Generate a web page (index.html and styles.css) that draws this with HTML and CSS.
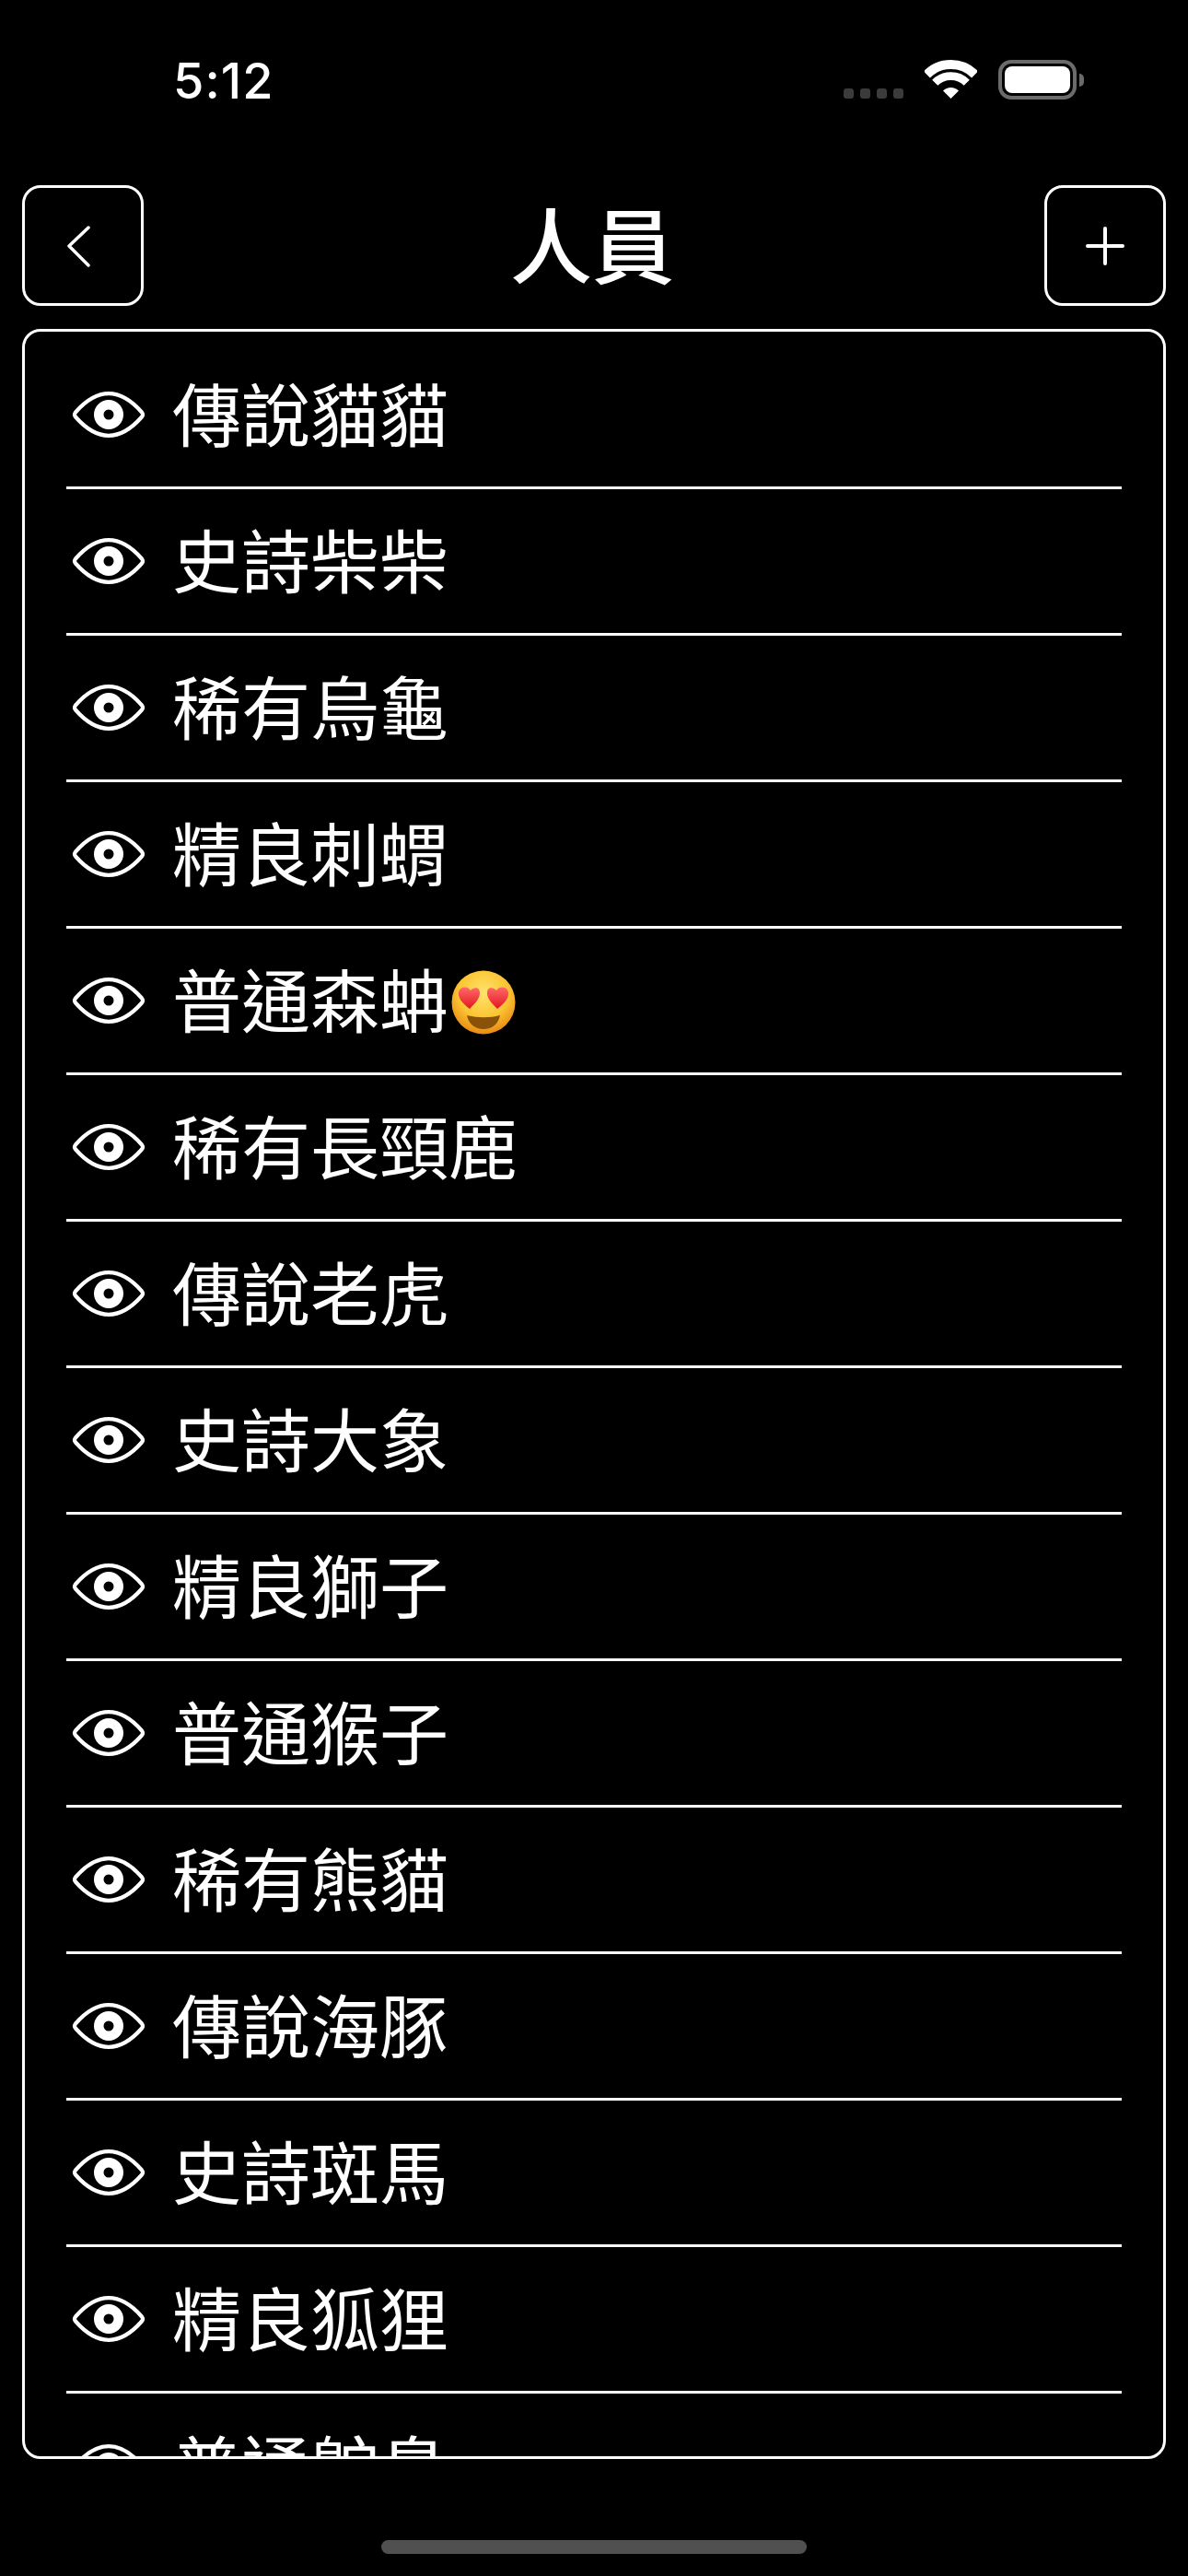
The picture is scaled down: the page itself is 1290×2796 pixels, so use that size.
FILE: index.html
```html
<!DOCTYPE html>
<html>
  <head>
    <title>人員</title>
    <meta charset="utf-8">
    <link rel="stylesheet" href="styles.css">
  </head>
  <body>
    <svg class="defs" width="0" height="0">
      <symbol id="eye" viewBox="0 0 80 50">
        <path d="M4 22.500C15 10 28 2.200 40 2.200S65 10 76 22.500Q78 25 76 27.500C65 40 52 47.800 40 47.800S15 40 4 27.500Q2 25 4 22.500Z" fill="none" stroke="#fff" stroke-width="4.200" stroke-linejoin="round"/>
        <circle cx="40" cy="25" r="16" fill="#fff"/>
        <circle cx="40" cy="25" r="5.500" fill="#000"/>
      </symbol>
    </svg>

    <div class="status">
      <div class="time">5:12</div>
      <div class="status-icons">
        <div class="dots"><i></i><i></i><i></i><i></i></div>
        <svg class="wifi" width="57" height="42" viewBox="0 0 57 42">
          <path d="M2.340 15.840A37 37 0 0 1 54.660 15.840" fill="none" stroke="#fff" stroke-width="10"/>
          <path d="M11.250 24.750A24.400 24.400 0 0 1 45.750 24.750" fill="none" stroke="#fff" stroke-width="8.700"/>
          <path d="M28.500 42L20 33.500A12 12 0 0 1 37 33.500Z" fill="#fff"/>
        </svg>
        <div class="battery">
          <div class="battery-body"><div class="battery-fill"></div></div>
          <div class="battery-cap"></div>
        </div>
      </div>
    </div>

    <div class="nav">
      <button type="button" class="nav-button">
        <svg class="chevron" width="44" height="46" viewBox="0 0 44 46">
          <path d="M28 3L7 23L28 44" fill="none" stroke="#fff" stroke-width="3.500" stroke-linecap="round" stroke-linejoin="round"/>
        </svg>
      </button>
      <h1 class="title">人員</h1>
      <button type="button" class="nav-button">
        <svg width="42" height="42" viewBox="0 0 42 42">
          <path d="M21 2V40M2 21H40" fill="none" stroke="#fff" stroke-width="4" stroke-linecap="round"/>
        </svg>
      </button>
    </div>

    <div class="card">
      <ul class="list">
        <li class="row"><svg class="eye"><use href="#eye"/></svg><span class="name">傳說貓貓</span></li>
        <li class="row"><svg class="eye"><use href="#eye"/></svg><span class="name">史詩柴柴</span></li>
        <li class="row"><svg class="eye"><use href="#eye"/></svg><span class="name">稀有烏龜</span></li>
        <li class="row"><svg class="eye"><use href="#eye"/></svg><span class="name">精良刺蝟</span></li>
        <li class="row"><svg class="eye"><use href="#eye"/></svg><span class="name">普通森蚺</span>
          <svg class="emoji" width="70" height="70" viewBox="0 0 70 70">
            <defs>
              <radialGradient id="face" cx="50%" cy="35%" r="65%">
                <stop offset="0" stop-color="#ffe36b"/>
                <stop offset="0.6" stop-color="#fbc533"/>
                <stop offset="1" stop-color="#e98a12"/>
              </radialGradient>
              <linearGradient id="heart" x1="0" y1="0" x2="0" y2="1">
                <stop offset="0" stop-color="#ff6a6a"/>
                <stop offset="1" stop-color="#e3161f"/>
              </linearGradient>
            </defs>
            <circle cx="35" cy="35" r="34.500" fill="url(#face)"/>
            <path d="M17 49C27 52 43 52 53 49C51 59 44 64 35 64S19 59 17 49Z" fill="#8a5208"/>
            <path d="M20 42C12 36 7 30 8 24C9 18 17 16 21 22C25 18 31 18 31 25C31 31 25 37 20 42Z" fill="url(#heart)"/>
            <path d="M50 42C58 36 63 30 62 24C61 18 53 16 49 22C45 18 39 18 39 25C39 31 45 37 50 42Z" fill="url(#heart)"/>
          </svg>
        </li>
        <li class="row"><svg class="eye"><use href="#eye"/></svg><span class="name">稀有長頸鹿</span></li>
        <li class="row"><svg class="eye"><use href="#eye"/></svg><span class="name">傳說老虎</span></li>
        <li class="row"><svg class="eye"><use href="#eye"/></svg><span class="name">史詩大象</span></li>
        <li class="row"><svg class="eye"><use href="#eye"/></svg><span class="name">精良獅子</span></li>
        <li class="row"><svg class="eye"><use href="#eye"/></svg><span class="name">普通猴子</span></li>
        <li class="row"><svg class="eye"><use href="#eye"/></svg><span class="name">稀有熊貓</span></li>
        <li class="row"><svg class="eye"><use href="#eye"/></svg><span class="name">傳說海豚</span></li>
        <li class="row"><svg class="eye"><use href="#eye"/></svg><span class="name">史詩斑馬</span></li>
        <li class="row"><svg class="eye"><use href="#eye"/></svg><span class="name">精良狐狸</span></li>
        <li class="row"><svg class="eye"><use href="#eye"/></svg><span class="name">普通鴕鳥</span></li>
      </ul>
    </div>

    <div class="home-bar"></div>
  </body>
</html>
```

FILE: styles.css
```css
* {
  box-sizing: border-box;
}
html, body {
  margin: 0;
  height: 2796px;
  overflow: hidden;
  background-color: #000;
  color: #fff;
  font-family: "Noto Sans CJK TC", "Noto Sans", sans-serif;
}
.defs {
  display: block;
  height: 0;
}

/* status bar */
.status {
  display: flex;
  justify-content: space-between;
  height: 201px;
  padding: 65px 113px 0 188px;
}
.time {
  font-family: Inter, "Liberation Sans", sans-serif;
  font-size: 54px;
  font-weight: 500;
  line-height: 46px;
  letter-spacing: 1px;
}
.status-icons {
  display: flex;
  align-items: flex-start;
  gap: 23px;
}
.dots {
  display: flex;
  gap: 7px;
  margin-top: 31px;
}
.dots i {
  display: block;
  width: 11px;
  height: 11px;
  border-radius: 3px;
  background-color: #3b3b3b;
}
.wifi {
  display: block;
}
.battery {
  display: flex;
  align-items: center;
  gap: 3px;
}
.battery-body {
  width: 85px;
  height: 43px;
  padding: 3px;
  border: 4px solid #6b6b6b;
  border-radius: 14px;
}
.battery-fill {
  height: 100%;
  border-radius: 8px;
  background-color: #fff;
}
.battery-cap {
  width: 5px;
  height: 14px;
  border-radius: 0 5px 5px 0;
  background-color: #6b6b6b;
}

/* nav */
.nav {
  display: flex;
  align-items: center;
  padding: 0 24px;
}
.nav-button {
  display: flex;
  align-items: center;
  justify-content: center;
  width: 132px;
  height: 131px;
  padding: 0;
  border: 3px solid #fff;
  border-radius: 20px;
  background: none;
}
.title {
  flex: 1;
  margin: 0;
  padding: 0 4px 8px 0;
  font-size: 89px;
  font-weight: 500;
  line-height: 123px;
  text-align: center;
}

/* list */
.card {
  height: 2312px;
  margin: 25px 24px 0;
  border: 3px solid #fff;
  border-radius: 20px;
  overflow: hidden;
}
.list {
  margin: 0;
  padding: 12px 45px 0;
  list-style: none;
}
.row {
  display: flex;
  align-items: center;
  height: 159px;
  padding-left: 6px;
  border-bottom: 3px solid #fff;
}
.row:last-child {
  border-bottom: none;
}
.eye {
  flex: none;
  width: 80px;
  height: 50px;
}
.name {
  margin-left: 29px;
  padding-bottom: 6px;
  font-size: 75px;
  line-height: 100px;
  white-space: nowrap;
}
.emoji {
  flex: none;
  margin: 3px 0 0 3px;
}

.home-bar {
  width: 462px;
  height: 15px;
  margin: 88px auto 0;
  border-radius: 8px;
  background-color: #505050;
}
```
